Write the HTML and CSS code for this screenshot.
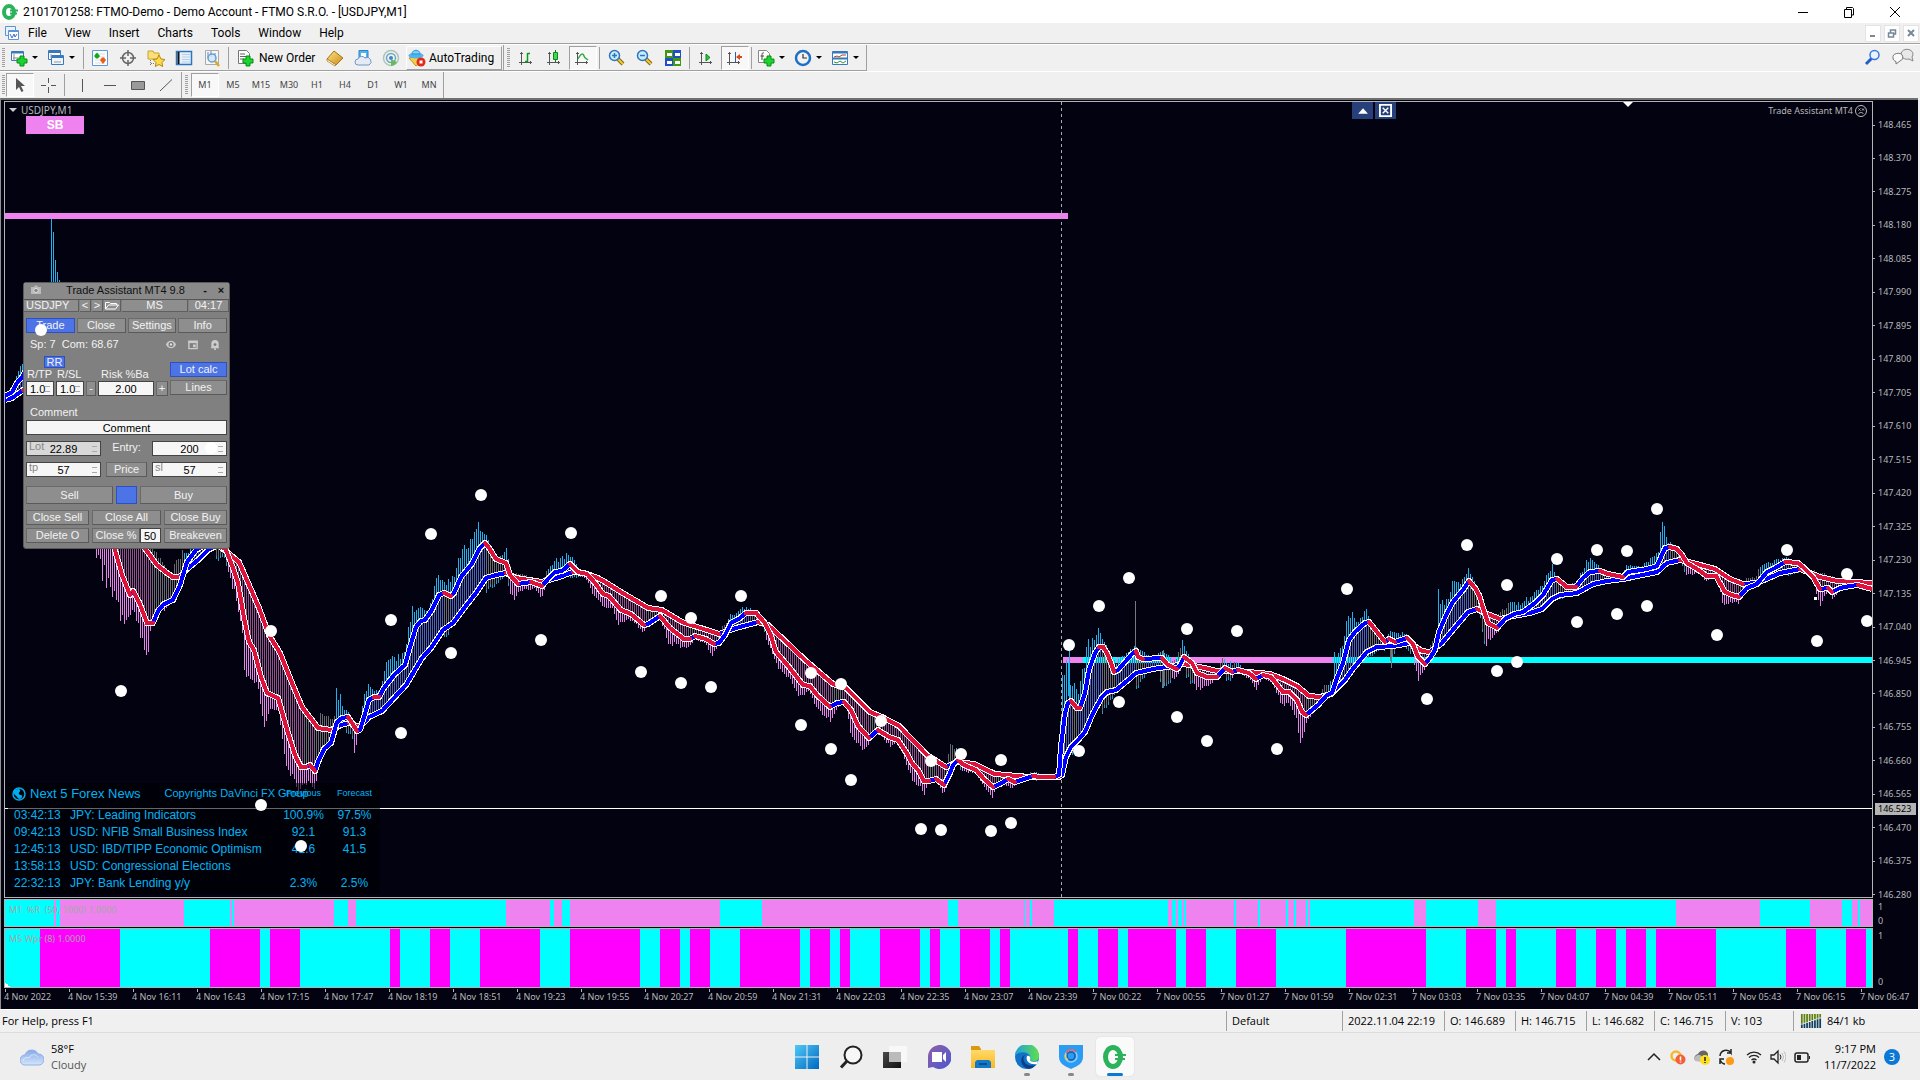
FILE: index.html
```html
<!DOCTYPE html>
<html lang="en">
<head>
<meta charset="utf-8">
<title>2101701258: FTMO-Demo - Demo Account - FTMO S.R.O. - [USDJPY,M1]</title>
<link rel="stylesheet" href="styles.css">
</head>
<body>
<svg class="defs" aria-hidden="true">
  <defs>
    <linearGradient id="gWin" x1="0" y1="0" x2="1" y2="1"><stop offset="0" stop-color="#4fc9f7"/><stop offset="1" stop-color="#0067c0"/></linearGradient>
    <linearGradient id="gDark" x1="0" y1="0" x2="1" y2="1"><stop offset="0" stop-color="#4a4a4a"/><stop offset="1" stop-color="#111"/></linearGradient>
    <linearGradient id="gChat" x1="0" y1="0" x2="1" y2="1"><stop offset="0" stop-color="#8f5fa8"/><stop offset="1" stop-color="#4a58d0"/></linearGradient>
    <linearGradient id="gFold" x1="0" y1="0" x2="0" y2="1"><stop offset="0" stop-color="#ffd96a"/><stop offset="1" stop-color="#f8b820"/></linearGradient>
    <linearGradient id="gEdge" x1="0" y1="0" x2="1" y2="0"><stop offset="0" stop-color="#1f9fe0"/><stop offset="1" stop-color="#5fe04a"/></linearGradient>
    <linearGradient id="gCloud" x1="0" y1="0" x2="0" y2="1"><stop offset="0" stop-color="#86a9e8"/><stop offset="1" stop-color="#d5e6fb"/></linearGradient>
    <linearGradient id="gGold" x1="0" y1="0" x2="1" y2="1"><stop offset="0" stop-color="#ffe58a"/><stop offset="1" stop-color="#c98a12"/></linearGradient>
    <g id="plus"><path d="M9 7h4v3h3v4h-3v3H9v-3H6v-4h3z" fill="#19d52e" stroke="#0b8a14"/></g>
    <g id="axes" fill="none" stroke="#555"><path d="M3.500 3v13M1 13.500h13M2 4.500h3M12.500 12v3"/></g>
    <g id="glass"><path d="M10 10l5 5" stroke="#8a6a10" stroke-width="4"/><path d="M10 10l5 5" stroke="#f0c840" stroke-width="2"/><circle cx="6.500" cy="6.500" r="5" fill="#c9ecfb" stroke="#2f74bd" stroke-width="1.500"/></g>
  </defs>
</svg>

<header class="titlebar">
  <svg class="logo" viewBox="0 0 16 16"><ellipse cx="7" cy="8" rx="5" ry="6" fill="#fff" stroke="#2bb35c" stroke-width="4"/><path d="M8 6.500h8M8 9.500h7" stroke="#2bb35c" stroke-width="2"/></svg>
  <h1>2101701258: FTMO-Demo - Demo Account - FTMO S.R.O. - [USDJPY,M1]</h1>
  <div class="wincontrols">
    <button aria-label="Minimize"><svg viewBox="0 0 12 12"><path d="M1 6.500h10" stroke="#000"/></svg></button>
    <button aria-label="Restore"><svg viewBox="0 0 12 12"><path d="M1.500 3.500h7v8h-7zM3.500 3V1.500h6l1 1V9H9" fill="none" stroke="#000"/></svg></button>
    <button aria-label="Close"><svg viewBox="0 0 12 12"><path d="M1 1l10 10M11 1L1 11" stroke="#000"/></svg></button>
  </div>
</header>

<nav class="menubar">
  <svg class="mdi" viewBox="0 0 16 16"><path d="M1.500 1.500h10v9h-10z" fill="#eaf3fc" stroke="#5d94d8"/><path d="M4.500 5.500h10v9h-10z" fill="#fff" stroke="#5d94d8"/><path d="M5 6.500h9" stroke="#5d94d8"/><path d="M6 9l2 4 2-4 1 3 2-3" fill="none" stroke="#3b6fd0"/></svg>
  <button>File</button><button>View</button><button>Insert</button><button>Charts</button><button>Tools</button><button>Window</button><button>Help</button>
  <div class="mdicontrols">
    <button aria-label="Minimize chart"><svg viewBox="0 0 10 10"><path d="M2 8h5" stroke="#778899" stroke-width="2"/></svg></button>
    <button aria-label="Restore chart"><svg viewBox="0 0 10 10"><path d="M1.500 5h5v4h-5zM3.500 5V2h5v4H7" fill="none" stroke="#778899" stroke-width="1.500"/></svg></button>
    <button aria-label="Close chart"><svg viewBox="0 0 10 10"><path d="M2 2l6 6M8 2L2 8" stroke="#778899" stroke-width="2"/></svg></button>
  </div>
</nav>

<div class="toolrow">
  <div class="toolbar main-tools">
    <span class="grip"></span>
    <button class="tool drop" aria-label="New chart"><svg viewBox="0 0 18 18"><path d="M1.500 2.500h12v9h-12z" fill="#fff" stroke="#3a78bd"/><path d="M2 3.500h11" stroke="#3a78bd" stroke-width="2"/><path d="M4 5v6M3 9h8" stroke="#888"/><use href="#plus" x="1"/></svg></button>
    <button class="tool drop" aria-label="Profiles"><svg viewBox="0 0 18 18"><path d="M1.500 1.500h12v9h-12z" fill="#fff" stroke="#3a78bd"/><path d="M1.500 3h12" stroke="#3a78bd" stroke-width="2"/><path d="M4.500 6.500h12v9h-12z" fill="#eef6fd" stroke="#3a78bd"/><path d="M5 8h11" stroke="#3a78bd" stroke-width="2"/><path d="M7 13h7M4 5v4" stroke="#999"/></svg></button>
    <span class="sep"></span>
    <button class="tool" aria-label="Market Watch"><svg viewBox="0 0 18 18"><path d="M1.500 1.500h15v15h-15z" fill="#fff" stroke="#5a9bdc"/><path d="M4 14h10M4 11h10M4 8h10M4 5h10" stroke="#ddd"/><path d="M3 7l3-3.500L9 7 7 9.500H5z" fill="#14a81c"/><path d="M9 11l2-2.500h2L15 11l-3 4z" fill="#f05a14"/></svg></button>
    <button class="tool" aria-label="Data Window"><svg viewBox="0 0 18 18"><circle cx="9" cy="9" r="5.500" fill="none" stroke="#666" stroke-width="1.500"/><path d="M9 1v6M9 11v6M1 9h6M11 9h6" stroke="#666" stroke-width="1.500"/></svg></button>
    <button class="tool" aria-label="Navigator"><svg viewBox="0 0 18 18"><path d="M1 2h5l1 2h5v6H1z" fill="#fbe07a" stroke="#c9a030"/><path d="M3.500 11v6M4 14.500h4" stroke="#777" stroke-dasharray="1 1"/><path d="M12 6l2 4 4 .5-3 3 .7 4-3.700-2-3.700 2 .7-4-3-3 4-.5z" fill="#ffd94a" stroke="#b58a10"/></svg></button>
    <button class="tool" aria-label="Terminal"><svg viewBox="0 0 18 18"><path d="M1.500 2.500h15v13h-15z" fill="#e5f1fc" stroke="#2f74bd" stroke-width="1.500"/><path d="M3.500 3v12" stroke="#111" stroke-width="2"/><path d="M7 5.500h8M7 8h8M7 10.500h8M7 13h8" stroke="#b8cfe6"/></svg></button>
    <button class="tool" aria-label="Strategy Tester"><svg viewBox="0 0 18 18"><path d="M2.500 1.500h13v14h-13z" fill="#f6f6f6" stroke="#aaa"/><path d="M5 3v6M8 2v6M12 4v6" stroke="#5a8ac0"/><path d="M12 12l4 5" stroke="#d9a92a" stroke-width="2.500"/><circle cx="9" cy="9" r="4" fill="#cfe6f8cc" stroke="#6a9ed0" stroke-width="1.500"/></svg></button>
    <span class="sep wide-sep"></span>
    <button class="tool text" id="new-order"><svg viewBox="0 0 18 18"><path d="M2.500 1.500h8l3 3v10h-11z" fill="#fff" stroke="#777"/><path d="M4 5h5M4 7.500h7M4 10h4" stroke="#666"/><use href="#plus" x="1"/></svg>New Order</button>
    <button class="tool" aria-label="MetaEditor"><svg viewBox="0 0 18 18"><path d="M1 10l7-8 9 7-7 7z" fill="url(#gGold)" stroke="#a8740c"/><path d="M1 10l9 6-1 1-8-5z" fill="#fff" stroke="#a8740c" stroke-width=".7"/></svg></button>
    <button class="tool" aria-label="Signals"><svg viewBox="0 0 18 18"><path d="M5 1.500h9v8H5z" fill="#4fb5ee" stroke="#2f80c8"/><path d="M7 4h5v4H7z" fill="#fff"/><path d="M4 16a3 3 0 0 1 0-6 4 4 0 0 1 7-1 4 4 0 0 1 4 7z" fill="#e4ebf4" stroke="#6f98c8"/></svg></button>
    <button class="tool" aria-label="VPS"><svg viewBox="0 0 18 18"><g fill="none"><circle cx="9" cy="9" r="7.500" stroke="#aac5b8" stroke-width="1.500"/><circle cx="9" cy="9" r="4.500" stroke="#6fa6c8" stroke-width="1.500"/></g><circle cx="9" cy="9" r="2" fill="#3f84c8"/><path d="M9 10v7a8 8 0 0 0 6-4" fill="#67bb5c"/></svg></button>
    <button class="tool text auto"><svg viewBox="0 0 18 18"><path d="M1 9l7 8 5-4-2-6z" fill="#f4cd4a" stroke="#c09520"/><ellipse cx="8" cy="6.500" rx="7.500" ry="3" fill="#4fb5ee"/><path d="M4 5c0-5 8-5 8 0z" fill="#7fd0f7" stroke="#2f90d0"/><circle cx="13" cy="13" r="4.500" fill="#e02a1a"/><path d="M11.500 11.500h3v3h-3z" fill="#fff"/></svg>AutoTrading</button>
  </div>
  <div class="toolbar chart-tools">
    <span class="grip"></span>
    <button class="tool" aria-label="Bar chart"><svg viewBox="0 0 18 18"><use href="#axes"/><path d="M9.500 4v9M9.500 4.500H12M7 12.500h2.500" stroke="#0a9a1a" stroke-width="1.500" fill="none"/></svg></button>
    <button class="tool" aria-label="Candlesticks"><svg viewBox="0 0 18 18"><use href="#axes"/><path d="M9.500 1v12" stroke="#0a7a1a"/><path d="M7.500 3.500h4v7h-4z" fill="#3fd94f" stroke="#0a8a1a"/></svg></button>
    <button class="tool pressed" aria-label="Line chart"><svg viewBox="0 0 18 18"><use href="#axes"/><path d="M4 10c3-6 5-6 6-3s2 2 4 4" stroke="#3aa84a" stroke-width="1.500" fill="none"/></svg></button>
    <span class="sep wide-sep"></span>
    <button class="tool" aria-label="Zoom in"><svg viewBox="0 0 18 18"><use href="#glass"/><path d="M4 6.500h5M6.500 4v5" stroke="#2f74bd" stroke-width="1.500"/></svg></button>
    <button class="tool" aria-label="Zoom out"><svg viewBox="0 0 18 18"><use href="#glass"/><path d="M4 6.500h5" stroke="#2f74bd" stroke-width="1.500"/></svg></button>
    <button class="tool" aria-label="Tile windows"><svg viewBox="0 0 18 18"><path d="M1 1h8v8H1zM9 9h8v8H9z" fill="#3f9a10"/><path d="M9 1h8v8H9zM1 9h8v8H1z" fill="#1f4fc8"/><path d="M3 4h5v3H3zM11 4h5v3h-5zM3 12h5v3H3zM11 12h5v3h-5z" fill="#fff"/></svg></button>
    <span class="sep wide-sep"></span>
    <button class="tool" aria-label="Auto scroll"><svg viewBox="0 0 18 18"><use href="#axes"/><path d="M8 5l4 3.500L8 12z" fill="#2fc23f" stroke="#0a8a1a"/></svg></button>
    <button class="tool pressed" aria-label="Chart shift"><svg viewBox="0 0 18 18"><use href="#axes"/><path d="M9.500 3v10" stroke="#2860b0"/><path d="M10 8l4-3v2h2v2h-2v2z" fill="#d8481a"/></svg></button>
    <span class="sep wide-sep"></span>
    <button class="tool drop" aria-label="Indicators"><svg viewBox="0 0 18 18"><path d="M1.500 1.500h8l3 3v9h-11z" fill="#fff" stroke="#888"/><path d="M7 4c-2-1-2 1-2 3v4M3.500 7H7" fill="none" stroke="#444"/><use href="#plus" x="1"/></svg></button>
    <button class="tool drop" aria-label="Periods"><svg viewBox="0 0 18 18"><circle cx="9" cy="9" r="7" fill="#f2f2f2" stroke="#1f6fc8" stroke-width="2.500"/><path d="M9 5v4h4" fill="none" stroke="#333" stroke-width="1.200"/></svg></button>
    <button class="tool drop" aria-label="Templates"><svg viewBox="0 0 18 18"><path d="M1.500 2.500h15v13h-15z" fill="#fff" stroke="#3a78bd"/><path d="M2 3.500h14M2 9.500h14" stroke="#3a78bd" stroke-width="2"/><path d="M3 8l3-1 2 1 3-2 4 0" fill="none" stroke="#a8441a"/><path d="M3 13l3 1 3-2 3 2 3-2" fill="none" stroke="#2a9a3a"/></svg></button>
  </div>
  <div class="toolbar-end">
    <button aria-label="Search"><svg viewBox="0 0 18 18"><path d="M2 16l6-6" stroke="#1f5fc8" stroke-width="3"/><circle cx="10.500" cy="7" r="4.500" fill="#e9f2ff" stroke="#3a78dd" stroke-width="1.500"/></svg></button>
    <button aria-label="Messages"><svg class="wide" viewBox="0 0 22 18"><path d="M9 6a6 5 0 1 1 11 3l1 4-4-2c-5 1-8-2-8-5z" fill="#e8e8e8" stroke="#888"/><path d="M1 10a5 4 0 1 1 7 3l-4 3v-2.500c-2-.5-3-2-3-3.500z" fill="#fafafa" stroke="#777"/></svg></button>
  </div>
</div>

<div class="toolrow second">
  <div class="toolbar line-tools">
    <span class="grip"></span>
    <button class="tool pressed" aria-label="Cursor"><svg viewBox="0 0 18 18"><path d="M5 2v12l3-3 2.500 5 2-1-2.500-5h4z" fill="#555"/></svg></button>
    <button class="tool" aria-label="Crosshair"><svg viewBox="0 0 18 18"><path d="M9.500 2v5M9.500 11v6M2 9.500h5M12 9.500h5" stroke="#555"/></svg></button>
    <span class="sep wide-sep"></span>
    <button class="tool" aria-label="Vertical line"><svg viewBox="0 0 18 18"><path d="M9.500 3v13" stroke="#555"/></svg></button>
    <button class="tool" aria-label="Horizontal line"><svg viewBox="0 0 18 18"><path d="M3 9.500h12" stroke="#555"/></svg></button>
    <button class="tool" aria-label="Rectangle"><svg viewBox="0 0 18 18"><path d="M2.500 5.500h13v8h-13z" fill="#999" stroke="#555"/></svg></button>
    <button class="tool" aria-label="Trendline"><svg viewBox="0 0 18 18"><path d="M3 15L15 3.500" stroke="#555"/></svg></button>
  </div>
  <div class="toolbar periods">
    <span class="grip"></span>
    <button class="tool pressed">M1</button><button class="tool">M5</button><button class="tool">M15</button><button class="tool">M30</button><button class="tool">H1</button><button class="tool">H4</button><button class="tool">D1</button><button class="tool">W1</button><button class="tool">MN</button>
  </div>
</div>

<main class="chart">
  <section class="plot" aria-label="USDJPY chart">
    <svg class="canvas" id="series" viewBox="5 102 1867 795" preserveAspectRatio="none"></svg>
    <div class="symbol"><svg viewBox="0 0 8 5"><path d="M0 0h8L4 4z" fill="#ccc"/></svg>USDJPY,M1</div>
    <button class="sb">SB</button>
    <div class="chartbtns">
      <button aria-label="Collapse"><svg viewBox="0 0 12 12"><path d="M2 9h9L6.500 4z" fill="#fff"/></svg></button>
      <button aria-label="Hide"><svg viewBox="0 0 14 14"><path d="M1 1h12v12H1z" fill="#274079" stroke="#fff" stroke-width="2"/><path d="M4 4l6 6M10 4l-6 6" stroke="#fff" stroke-width="1.500"/></svg></button>
    </div>
    <div class="expert">Trade Assistant MT4<svg viewBox="0 0 12 12"><g fill="none" stroke="#bbb"><circle cx="6" cy="6" r="5.500"/><path d="M3.500 3.500l2 2M5.500 3.500l-2 2M7 3.500l2 2M9 3.500l-2 2M3.500 9c1-2 4-2 5 0"/></g></svg></div>

    <div class="news">
      <table>
        <colgroup><col class="c-time"><col class="c-event"><col class="c-num"><col class="c-num"></colgroup>
        <thead><tr>
          <th class="head" colspan="2"><svg viewBox="0 0 14 14"><circle cx="7" cy="7" r="6" fill="none" stroke="#00aeef" stroke-width="1.500"/><path d="M2 4c2-2 5-3 6-1s-2 2-1 4 4 0 3 3-4 2-5 0-4-2-3-6z" fill="#00aeef"/></svg><span class="name">Next 5 Forex News</span><span class="copy">Copyrights DaVinci FX Group</span></th>
          <th>Previous</th><th>Forecast</th></tr></thead>
        <tbody>
          <tr><td>03:42:13</td><td>JPY: Leading Indicators</td><td>100.9%</td><td>97.5%</td></tr>
          <tr><td>09:42:13</td><td>USD: NFIB Small Business Index</td><td>92.1</td><td>91.3</td></tr>
          <tr><td>12:45:13</td><td>USD: IBD/TIPP Economic Optimism</td><td>41.6</td><td>41.5</td></tr>
          <tr><td>13:58:13</td><td>USD: Congressional Elections</td><td></td><td></td></tr>
          <tr><td>22:32:13</td><td>JPY: Bank Lending y/y</td><td>2.3%</td><td>2.5%</td></tr>
        </tbody>
      </table>
    </div>

    <form class="assistant">
      <div class="a-title"><svg viewBox="0 0 12 10"><path d="M1 2h3l1-1.500h2L8 2h3v7H1z" fill="#bbb"/><circle cx="6" cy="5.500" r="2.200" fill="#888" stroke="#ddd"/></svg><span>Trade Assistant MT4 9.8</span><button type="button" aria-label="Minimize panel">-</button><button type="button" aria-label="Close panel">×</button></div>
      <div class="a-info"><span class="cell sym">USDJPY</span><button type="button" class="cell">&lt;</button><button type="button" class="cell">&gt;</button><button type="button" class="cell" aria-label="Open"><svg viewBox="0 0 14 9"><path d="M.5 8V1.500h4l1 1h6V4M.5 8l3-4h10l-3 4z" fill="none" stroke="#fff"/></svg></button><span class="cell">MS</span><span class="cell">04:17</span></div>
      <div class="a-body">
        <div class="row tabs"><button type="button" class="on">Trade</button><button type="button">Close</button><button type="button">Settings</button><button type="button">Info</button></div>
        <div class="row spread"><span>Sp: 7&nbsp; Com: 68.67</span>
          <svg viewBox="0 0 12 10"><path d="M1 5c2-5 8-5 10 0-2 5-8 5-10 0z" fill="#ccc"/><circle cx="6" cy="5" r="2.500" fill="#777"/><circle cx="6" cy="5" r="1.200" fill="#ddd"/></svg>
          <svg viewBox="0 0 12 12"><path d="M1.500 2.500h9v8h-9z" fill="none" stroke="#ccc" stroke-width="1.500"/><path d="M1 3.500h10" stroke="#ccc" stroke-width="2"/><path d="M6 6h3v3H6z" fill="#ccc"/></svg>
          <svg viewBox="0 0 12 12"><path d="M2 9V5a4 4 0 0 1 8 0v4l1 1H1z" fill="#ccc"/><path d="M5 11h2" stroke="#ccc" stroke-width="2"/><circle cx="6" cy="6" r="1.500" fill="#777"/></svg></div>
        <div class="risk">
          <div class="rr"><button type="button" class="on">RR</button></div>
          <label for="rtp">R/TP</label><label for="rsl">R/SL</label><label for="risk" class="wide-label">Risk %Ba</label>
          <span class="field small"><input id="rtp" value="1.0"><i></i></span><span class="field small"><input id="rsl" value="1.0"><i></i></span><button type="button">-</button><input id="risk" class="mid" value="2.00"><button type="button">+</button>
        </div>
        <div class="side"><button type="button" class="on">Lot calc</button><button type="button">Lines</button></div>
        <label class="full clabel" for="comment">Comment</label>
        <input id="comment" class="full mid" value="Comment">
        <div class="row trio"><span class="field grey"><label for="lot">Lot</label><input id="lot" value="22.89"><i></i></span><label for="entry" class="center">Entry:</label><span class="field"><input id="entry" value="200"><i></i></span></div>
        <div class="row trio"><span class="field"><label for="tp">tp</label><input id="tp" value="57"><i></i></span><button type="button">Price</button><span class="field"><label for="sl">sl</label><input id="sl" value="57"><i></i></span></div>
        <div class="row deal"><button type="button">Sell</button><button type="button" class="on" aria-label="Toggle"></button><button type="button">Buy</button></div>
        <div class="row closes"><button type="button">Close Sell</button><button type="button">Close All</button><button type="button">Close Buy</button></div>
        <div class="row closes"><button type="button">Delete O</button><span class="pct"><button type="button">Close %</button><input aria-label="Close percent" value="50"></span><button type="button">Breakeven</button></div>
      </div>
    </form>
    <svg class="canvas over" id="dots" viewBox="5 102 1867 795" preserveAspectRatio="none"></svg>
  </section>
  <div class="prices">
    <span>148.465</span><span>148.370</span><span>148.275</span><span>148.180</span><span>148.085</span><span>147.990</span><span>147.895</span><span>147.800</span><span>147.705</span><span>147.610</span><span>147.515</span><span>147.420</span><span>147.325</span><span>147.230</span><span>147.135</span><span>147.040</span><span>146.945</span><span>146.850</span><span>146.755</span><span>146.660</span><span>146.565</span><span>146.470</span><span>146.375</span><span>146.280</span>
    <b class="last">146.523</b>
  </div>
  <section class="strip s1"><svg class="canvas" id="strip1" viewBox="5 0 1867 10" preserveAspectRatio="none"></svg><span>M1&nbsp; %R&nbsp; (50, 1000) 1.0000</span></section>
  <div class="scale"><span>1</span><span>0</span></div>
  <section class="strip s2"><svg class="canvas" id="strip2" viewBox="5 0 1867 10" preserveAspectRatio="none"></svg><span>M5 Wpr (8) 1.0000</span></section>
  <div class="scale"><span>1</span><span>0</span></div>
  <div class="times">
    <span>4 Nov 2022</span><span>4 Nov 15:39</span><span>4 Nov 16:11</span><span>4 Nov 16:43</span><span>4 Nov 17:15</span><span>4 Nov 17:47</span><span>4 Nov 18:19</span><span>4 Nov 18:51</span><span>4 Nov 19:23</span><span>4 Nov 19:55</span><span>4 Nov 20:27</span><span>4 Nov 20:59</span><span>4 Nov 21:31</span><span>4 Nov 22:03</span><span>4 Nov 22:35</span><span>4 Nov 23:07</span><span>4 Nov 23:39</span><span>7 Nov 00:22</span><span>7 Nov 00:55</span><span>7 Nov 01:27</span><span>7 Nov 01:59</span><span>7 Nov 02:31</span><span>7 Nov 03:03</span><span>7 Nov 03:35</span><span>7 Nov 04:07</span><span>7 Nov 04:39</span><span>7 Nov 05:11</span><span>7 Nov 05:43</span><span>7 Nov 06:15</span><span>7 Nov 06:47</span>
  </div>
</main>

<footer class="status">
  <span class="help">For Help, press F1</span><span class="profile">Default</span><span class="date">2022.11.04 22:19</span><span class="v">O: 146.689</span><span class="v">H: 146.715</span><span class="v low">L: 146.682</span><span class="v">C: 146.715</span><span class="v low">V: 103</span>
  <span class="net"><svg viewBox="0 0 24 16"><path d="M1.500 0v11M4.500 0v10M7.500 0v9M10.500 0v8M13.500 0v7M16.500 0v6M19.500 0v5M22.500 0v4" stroke="#5f7f10" stroke-width="2"/><path d="M1.500 16v-4M4.500 16v-5M7.500 16v-6M10.500 16v-7M13.500 16v-8M16.500 16v-9M19.500 16V6M22.500 16V5" stroke="#0f3f60" stroke-width="2"/></svg>84/1 kb</span>
</footer>

<div class="taskbar">
  <button class="weather"><svg viewBox="0 0 24 18"><path d="M5 17a5 5 0 0 1 0-10 7 7 0 0 1 13-1 5.500 5.500 0 0 1 1 11z" fill="url(#gCloud)" stroke="#8fb0ea"/><path d="M3 13a4 4 0 0 1 6-3 5 5 0 0 1 9-1" fill="none" stroke="#fff" opacity=".5"/></svg><span>58°F<small>Cloudy</small></span></button>
  <div class="apps">
    <button aria-label="Start"><svg viewBox="0 0 24 24"><path d="M0 0h11.500v11.500H0zM12.500 0H24v11.500H12.500zM0 12.500h11.500V24H0zM12.500 12.500H24V24H12.500z" fill="url(#gWin)"/></svg></button>
    <button aria-label="Search"><svg viewBox="0 0 24 24"><circle cx="14" cy="10" r="8.500" fill="#f7f7f7" stroke="#222" stroke-width="2"/><path d="M8 16l-6 6.500" stroke="#222" stroke-width="3"/></svg></button>
    <button aria-label="Task view"><svg viewBox="0 0 24 24"><path d="M0 7h18v16H0z" fill="url(#gDark)"/><path d="M6 1h18v16H6z" fill="#f8f8f8"/><path d="M6 7h12v10H6z" fill="#bbb"/></svg></button>
    <button aria-label="Chat"><svg viewBox="0 0 24 24"><path d="M12 0a12 12 0 1 1-6 22l-5 1 0-11A12 12 0 0 1 12 0z" fill="url(#gChat)"/><path d="M5 7h10v10H5zM16 10l3-3v10l-3-3z" fill="#fff"/></svg></button>
    <button aria-label="File Explorer"><svg viewBox="0 0 24 24"><path d="M0 1h8l2 3v4H0z" fill="#d99a10"/><path d="M0 5h24v18H0z" fill="url(#gFold)"/><path d="M4 23v-6l2-2h12l2 2v6z" fill="#1478c8"/><path d="M8 19h8" stroke="#0a4f90" stroke-width="2"/></svg></button>
    <button class="run" aria-label="Edge"><svg viewBox="0 0 24 24"><circle cx="12" cy="12" r="12" fill="#1272c8"/><path d="M0 11A12 12 0 0 1 24 11c0 5-4 6-8 5-3-1 0-2-1-5C13 6 3 6 0 11z" fill="url(#gEdge)"/><path d="M10 10c-4 4 0 13 11 10a12 12 0 0 1-7 4C5 22 4 12 10 10z" fill="#0c3f88"/><path d="M12 11c2-1 4 1 3 3s2 4 8 2l-1 3c-6 1-12-2-10-8z" fill="#fff"/></svg></button>
    <button class="run" aria-label="VPN"><svg viewBox="0 0 24 24"><path d="M0 0h24v12c0 6-5 9-12 12C5 21 0 18 0 12z" fill="#2a9cf4"/><g fill="none" stroke-width="1.500"><circle cx="12" cy="11" r="6" stroke="#8fd0f7"/><path d="M7 8a6 6 0 0 1 10-1" stroke="#f05a5a"/><circle cx="12" cy="11" r="4" stroke="#1560b0"/><path d="M9 15a5 5 0 0 1-2-6" stroke="#e8d05a"/></g></svg></button>
    <button class="active" aria-label="FTMO"><svg viewBox="0 0 24 24"><ellipse cx="10" cy="12" rx="7.500" ry="9.500" fill="none" stroke="#2bb35c" stroke-width="5"/><path d="M12 10h11M12 14h10M17 6v12" stroke="#2bb35c" stroke-width="2"/></svg></button>
  </div>
  <div class="tray">
    <button aria-label="Show hidden icons"><svg viewBox="0 0 16 16"><path d="M2 11l6-6 6 6" fill="none" stroke="#222" stroke-width="1.500"/></svg></button>
    <button aria-label="Sync alert"><svg viewBox="0 0 16 16"><circle cx="6" cy="7" r="4.500" fill="none" stroke="#f5b82a" stroke-width="2.500"/><circle cx="10.500" cy="10.500" r="5" fill="#f2603a"/><path d="M10.500 7.500v4M10.500 12.500v1" stroke="#fff" stroke-width="1.500"/></svg></button>
    <button aria-label="Cloud warning"><svg viewBox="0 0 16 16"><path d="M1 11a4 4 0 0 1 3-6c3-5 9-4 10 0v6z" fill="#666"/><path d="M1 12a4 4 0 0 1 7-4v5z" fill="#bbb"/><circle cx="11" cy="11" r="5" fill="#ffdf1a"/><path d="M11 8v4M11 13v1" stroke="#222" stroke-width="1.500"/></svg></button>
    <button aria-label="Update"><svg viewBox="0 0 16 16"><path d="M2 7a6 6 0 0 1 11-3V0M13 4H9M2 15v-5h4M2 11c1 2 3 4 5 4" fill="none" stroke="#222" stroke-width="1.500"/><circle cx="12" cy="12" r="4" fill="#ff9a14"/></svg></button>
    <button class="first" aria-label="Wi-Fi"><svg viewBox="0 0 16 16"><g fill="none" stroke="#222" stroke-width="1.300"><path d="M1 6a10 10 0 0 1 14 0M3 8.500a7 7 0 0 1 10 0M5.500 11a4 4 0 0 1 5 0"/></g><circle cx="8" cy="13" r="1.500" fill="#222"/></svg></button>
    <button aria-label="Volume"><svg viewBox="0 0 16 16"><path d="M1 6h3l4-4v12l-4-4H1z" fill="none" stroke="#222" stroke-width="1.300"/><path d="M10 5.500q2 2.500 0 5" fill="none" stroke="#222"/><path d="M12 4q3 4 0 8M14 2.500q4 5.500 0 11" fill="none" stroke="#bbb"/></svg></button>
    <button aria-label="Battery"><svg viewBox="0 0 16 16"><rect x="1" y="4" width="13" height="9" rx="2" fill="none" stroke="#222" stroke-width="1.500"/><path d="M3 6h4v5H3zM15 7h1v3h-1z" fill="#222"/></svg></button>
    <button class="clock">9:17 PM<br>11/7/2022</button>
    <button class="badge">3</button>
  </div>
</div>
<script src="chart.js"></script>
</body>
</html>
```
FILE: styles.css
```css
* { box-sizing: border-box; }
body {
  margin: 0;
  min-height: 100vh;
  display: flex;
  flex-direction: column;
  background: #f0f0f0;
  font: 12px/16px Roboto, "Open Sans", sans-serif;
  color: #000;
  overflow: hidden;
}
button, input { font: inherit; color: inherit; margin: 0; padding: 0; border: 0; background: none; border-radius: 0; }
button { white-space: nowrap; }
svg { display: block; flex: none; }
.defs { position: absolute; width: 0; height: 0; }

/* window frame */
.titlebar { display: flex; align-items: center; height: 23px; background: #fff; padding-left: 2px; }
.titlebar h1 { font-size: 12px; font-weight: 400; margin: 0 auto 0 5px; }
.logo { width: 16px; height: 16px; }
.wincontrols { display: flex; padding-right: 2px; }
.wincontrols button { width: 46px; height: 22px; display: grid; place-items: center; }
.wincontrols svg { width: 12px; height: 12px; }
.menubar { display: flex; align-items: center; height: 21px; padding: 0 1px 0 4px; border-bottom: 1px solid #a0a0a0; }
.menubar > button { padding: 0 9px; }
.mdi { width: 16px; height: 16px; margin-right: -1px; }
.mdicontrols { display: flex; gap: 3px; margin-left: auto; }
.mdicontrols button { width: 16px; height: 17px; background: #fff; display: grid; place-items: center; border: 1px solid #e4e4e4; }
.mdicontrols svg { width: 10px; height: 10px; }

/* toolbars */
.toolrow { display: flex; height: 27px; border-top: 1px solid #fff; }
.toolbar { display: flex; align-items: center; height: 26px; padding-left: 2px; border-bottom: 1px solid #a0a0a0; border-right: 1px solid #a0a0a0; }
.second .toolbar { border-bottom: 0; }
.grip { width: 3px; height: 20px; margin-right: 3px; background: repeating-linear-gradient(#a0a0a0 0 1px, transparent 1px 2px); }
.sep { width: 1px; height: 22px; margin: 0 2px 0 1px; background: #a0a0a0; }
.wide-sep { margin: 0 3px 0 2px; }
.tool { width: 28px; height: 24px; display: flex; align-items: center; justify-content: center; }
.tool svg, .toolbar-end svg { width: 18px; height: 18px; }
.tool.drop { width: 37px; justify-content: flex-start; padding-left: 2px; }
.tool.drop::after { content: ""; border: 3px solid transparent; border-top-color: #000; border-bottom: 0; margin-left: 4px; }
.tool.text { width: 89px; justify-content: flex-start; padding-left: 4px; gap: 5px; }
.tool.auto { width: 96px; gap: 3px; padding-left: 1px; border: 1px solid #fff; border-right-color: #a0a0a0; border-bottom-color: #a0a0a0; margin: 0 1px 0 1px; }
.tool.pressed { background: #f8f8f8; border: 1px solid #fff; border-top-color: #a0a0a0; border-left-color: #a0a0a0; }
.chart-tools { padding-left: 3px; }
.line-tools .grip { margin-right: 1px; }
.line-tools { padding-right: 1px; }
.toolbar-end { display: flex; gap: 10px; margin-left: auto; padding: 0 6px 2px 0; align-items: center; }
.toolbar-end .wide { width: 22px; }
.periods { font: 9px/12px "Noto Sans", sans-serif; color: #444; padding-left: 3px; }

/* chart window */
.chart {
  flex: 1;
  min-height: 600px;
  display: grid;
  grid-template-columns: minmax(0, 1fr) 45px;
  grid-template-rows: minmax(0, 1fr) 28px 60px 20px;
  row-gap: 1px;
  padding: 1px 0 0 3px;
  margin-right: 2px;
  background: #020210;
  border-top: 2px solid #707070;
  border-left: 1px solid #909090;
  font: 9px/12px "Noto Sans", sans-serif;
  color: #b8b8b8;
}
.plot, .strip { position: relative; border: 1px solid #b4b4b4; min-width: 0; }
.canvas { position: absolute; inset: 0; width: 100%; height: 100%; }
.over { pointer-events: none; }
.symbol { position: absolute; left: 4px; top: 2px; display: flex; align-items: center; gap: 4px; font-size: 10px; }
.symbol svg { width: 8px; height: 5px; }
.sb { position: absolute; left: 21px; top: 14px; width: 58px; height: 18px; background: #ee82ee; color: #fff; font: 700 12px/18px "Liberation Sans", sans-serif; }
.chartbtns { position: absolute; right: 476px; top: 0; display: flex; gap: 2px; }
.chartbtns button { width: 21px; height: 17px; background: #274079; display: grid; place-items: center; }
.chartbtns svg { width: 13px; height: 13px; }
.expert { position: absolute; right: 5px; top: 3px; display: flex; gap: 2px; }
.expert svg { width: 12px; height: 12px; }
.prices { position: relative; display: flex; flex-direction: column; justify-content: space-between; padding: 18px 0 0; margin-bottom: -3px; }
.prices span { display: flex; align-items: center; }
.prices span::before { content: ""; width: 2px; height: 1px; background: #b4b4b4; margin-right: 3px; }
.last { position: absolute; left: 2px; bottom: 86px; width: 41px; padding-left: 3px; background: #b4b4b4; color: #000; font-weight: 400; }
.strip > span { position: absolute; left: 4px; top: 4px; color: #a8a8a8; }
.s2::after { content: ""; position: absolute; left: 0; bottom: 0; width: 5px; height: 5px; background: linear-gradient(45deg, #fff 50%, transparent 50%); }
.scale { display: flex; flex-direction: column; justify-content: space-between; padding: 2px 0 0 5px; }
.times { grid-column: 1 / -1; display: grid; grid-template-columns: repeat(30, minmax(0, 1fr)); margin-right: -6px; overflow: hidden; }
.times span { white-space: nowrap; padding-top: 2px; position: relative; }
.times span::before { content: ""; position: absolute; left: 1px; top: 0; width: 1px; height: 3px; background: #b4b4b4; }

/* news table */
.news { position: absolute; left: 3px; bottom: 3px; width: 372px; background: rgba(0, 2, 4, .6); color: #00b4f4; font: 12px/17px "Liberation Sans", sans-serif; padding-bottom: 2px; }
.news table { border-collapse: collapse; table-layout: fixed; width: 100%; }
.news th, .news td { padding: 0; font-weight: 400; white-space: nowrap; text-align: center; }
.news thead th { font-size: 9px; height: 24px; padding-bottom: 3px; vertical-align: middle; }
.c-time { width: 62px; }
.c-num { width: 51px; }
.news td:first-child { text-align: left; padding-left: 6px; }
.news td:nth-child(2) { text-align: left; }
.news thead .head { text-align: left; padding-left: 4px; }
.head svg { width: 14px; height: 14px; display: inline-block; vertical-align: middle; margin-right: 4px; }
.head .name { font-size: 13px; vertical-align: middle; }
.head .copy { font-size: 11px; vertical-align: middle; margin-left: 24px; }

/* trade assistant panel */
.assistant { position: absolute; left: 18px; top: 180px; width: 207px; height: 267px; background: #808080; border: 1px solid #5a5a5a; border-radius: 3px; color: #f2f2f2; font: 11px/13px "Liberation Sans", sans-serif; }
.a-title { display: flex; height: 17px; align-items: center; padding: 0 2px 2px 6px; color: #111; background: #8a8a8a; border-bottom: 1px solid #555; }
.a-title svg { width: 12px; height: 10px; }
.a-title span { flex: 1; text-align: center; padding-left: 14px; }
.a-title button { width: 12px; font-weight: 700; margin-left: 4px; }
.a-info { display: grid; grid-template-columns: 55px 11px 11px 17px 1fr 40px; gap: 1px; height: 12px; }
.cell { background: #8e8e8e; border-right: 1px solid #5f5f5f; border-bottom: 1px solid #5f5f5f; line-height: 11px; text-align: center; display: grid; place-items: center; overflow: hidden; }
.cell svg { width: 14px; height: 9px; }
.sym { justify-content: start; padding-left: 2px; }
.a-body { padding: 6px 2px 0; display: grid; grid-template-columns: 142px 57px; column-gap: 2px; }
.a-body button { height: 15px; line-height: 13px; background: #8e8e8e; border: 1px solid #6a6a6a; border-right-color: #5a5a5a; border-bottom-color: #5a5a5a; color: #f2f2f2; overflow: hidden; }
.a-body button.on { background: #4d74e6; border-color: #2f50c0; }
.a-body input { height: 15px; background: #f6f6f6; color: #000; border: 1px solid #444; min-width: 0; width: 100%; padding: 0 3px; }
.a-body .mid, .field input { text-align: center; }
.row, .full { grid-column: 1 / -1; }
.row { display: grid; column-gap: 2px; }
.tabs { grid-template-columns: repeat(4, 1fr); }
.spread { grid-template-columns: 1fr 12px 12px 12px; column-gap: 10px; padding: 0 6px 0 4px; height: 23px; align-items: center; }
.spread svg { width: 12px; height: 11px; }
.risk { display: grid; grid-template-columns: 28px 28px 10px 56px 12px; column-gap: 2px; }
.risk .rr { grid-column: 1 / -1; height: 12px; padding-left: 18px; }
.risk .rr button { height: 12px; line-height: 10px; width: 21px; display: block; }
.risk > label { height: 13px; padding-left: 1px; }
.risk .wide-label { grid-column: 3 / -1; padding-left: 15px; }
.side { display: grid; row-gap: 3px; padding-top: 6px; align-content: start; }
.clabel { height: 14px; margin-top: 10px; padding-left: 4px; }
.trio { grid-template-columns: 75px 1fr 75px; column-gap: 5px; margin-top: 6px; }
.center { text-align: center; }
.field { position: relative; }
.field label { position: absolute; left: 3px; top: -1px; color: #888; }
.field i { position: absolute; right: 4px; top: 5px; width: 5px; height: 6px; border-top: 1px solid #aaa; border-bottom: 1px solid #aaa; }
.field input { display: block; }
.a-body .small input { text-align: left; }
.grey input { background: #d8d8d8; }
.deal { grid-template-columns: 1fr 21px 1fr; column-gap: 3px; margin: 9px 0 3px; }
.deal button { height: 18px; }
.closes { grid-template-columns: 63px 1fr 63px; column-gap: 3px; margin-top: 3px; }
.pct { display: grid; grid-template-columns: 48px 1fr; }

/* status bar */
.status { display: flex; height: 24px; align-items: center; padding-left: 2px; border-top: 1px solid #fff; border-bottom: 1px solid #dcdcdc; font: 11px/18px "Open Sans", sans-serif; }
.help { flex: 1; }
.status span + span { height: 20px; line-height: 20px; border-left: 1px solid #a0a0a0; padding-left: 5px; }
.profile { width: 116px; }
.date { width: 102px; }
.v { width: 71px; }
.v.low { width: 68px; }
.status .net { display: flex; align-items: center; gap: 4px; width: 127px; }
.net svg { width: 24px; height: 14px; }

/* taskbar */
.taskbar { display: grid; grid-template-columns: 1fr auto 1fr; align-items: center; height: 47px; background: #eee; font: 11px/16px "Open Sans", sans-serif; }
.weather { display: flex; justify-self: start; align-items: center; gap: 7px; padding-left: 20px; text-align: left; }
.weather svg { width: 24px; height: 18px; }
.weather small { display: block; font-size: 11px; color: #555; }
.apps { display: flex; gap: 6px; padding-left: 2px; }
.apps button { width: 38px; height: 39px; display: grid; place-items: center; position: relative; border-radius: 4px; }
.apps svg { width: 24px; height: 24px; }
.apps .active { background: #fafafa; box-shadow: 0 0 1px #bbb; }
.run::after, .active::after { content: ""; position: absolute; bottom: 0; left: 16px; width: 6px; height: 3px; border-radius: 2px; background: #888; }
.active::after { left: 11px; width: 16px; background: #0a78d4; }
.tray { display: flex; justify-self: end; align-items: center; gap: 8px; padding-right: 20px; }
.tray svg { width: 16px; height: 16px; }
.tray .first { margin-left: 4px; }
.clock { text-align: right; margin-left: 6px; }
.badge { width: 16px; height: 16px; border-radius: 50%; background: #0a78d4; color: #fff; line-height: 16px; text-align: center; }
```
FILE: chart.js
```js
// Draws the price plot and the two indicator strips.
const NS = 'http://www.w3.org/2000/svg';
const el = (parent, tag, attrs) => {
  const n = document.createElementNS(NS, tag);
  for (const k in attrs) n.setAttribute(k, attrs[k]);
  parent.appendChild(n);
  return n;
};
const pts = s => s.trim().split(/\s+/).map(p => p.split(',').map(Number));

const fast = pts(`5,396 12,392 17,383 23,376 40,340 60,400 90,470 115,550 122,575 130,595 133,591 139,602 147,623 153,623 158,611 164,604 173,600 180,585 187,562 196,550 215,540 226,550 233,568 238,583 244,618 249,642 254,650 261,677 267,693 278,698 282,712 288,733 295,755 301,767 306,767 310,765 315,771 318,762 324,749 331,743 337,722 342,718 348,717 352,723 357,731 360,730 364,717 369,700 374,697 379,697 384,688 394,675 405,665 410,647 416,627 421,621 425,620 432,610 439,595 444,593 451,596 454,593 461,577 471,565 480,548 485,543 489,548 496,559 506,563 510,575 518,584 531,582 542,586 549,578 555,572 562,571 570,564 578,572 587,574 595,583 603,594 609,596 621,610 631,614 644,625 648,624 660,616 670,628 684,639 690,639 695,636 706,639 714,644 719,643 725,635 731,623 740,618 746,613 756,613 764,622 770,633 776,652 789,667 803,685 810,686 817,695 830,707 837,703 844,702 851,710 858,726 869,738 878,730 889,737 898,740 906,752 912,763 918,770 924,781 929,781 936,779 944,785 950,773 953,765 958,760 964,765 976,770 984,779 993,787 1000,784 1008,779 1015,782 1033,776 1040,777 1054,777 1059,775 1061,747 1065,713 1068,703 1071,701 1077,708 1080,708 1085,693 1089,670 1095,653 1099,647 1103,647 1107,653 1111,663 1114,672 1118,670 1125,662 1132,654 1136,651 1138,657 1143,659 1162,658 1168,665 1177,669 1180,665 1184,657 1192,663 1197,673 1207,677 1217,677 1225,668 1232,672 1238,670 1249,673 1256,679 1263,675 1271,677 1283,692 1289,692 1297,700 1302,712 1306,715 1318,705 1327,695 1332,693 1337,678 1343,663 1349,640 1355,632 1365,623 1369,622 1377,632 1385,642 1389,639 1395,642 1407,638 1413,644 1418,657 1425,664 1430,658 1435,650 1439,632 1447,613 1453,602 1463,590 1469,581 1475,588 1479,595 1483,608 1488,623 1497,628 1505,619 1514,614 1523,612 1535,603 1543,595 1552,580 1557,579 1567,587 1576,587 1583,578 1590,572 1600,571 1608,574 1623,577 1628,572 1647,569 1657,566 1661,557 1665,548 1670,547 1677,549 1682,555 1687,563 1697,569 1707,576 1716,576 1725,592 1732,595 1739,597 1747,588 1757,584 1767,572 1775,568 1785,562 1798,563 1803,567 1813,577 1820,589 1828,588 1832,592 1840,588 1850,586 1858,585 1872,589`);
const slow = pts(`5,400 12,398 23,390 60,400 100,460 146,550 157,565 167,573 173,577 180,577 186,570 198,560 208,550 218,545 228,553 239,562 249,585 259,608 269,635 280,653 292,683 302,707 318,728 331,730 341,725 349,723 360,727 369,717 382,711 394,698 406,685 422,658 431,648 443,630 453,623 465,607 476,593 486,578 496,575 506,573 516,578 542,582 559,577 573,572 584,573 598,578 605,582 621,592 648,608 662,610 682,622 719,634 736,628 758,622 768,625 784,640 805,660 833,684 846,688 870,712 882,717 899,726 927,755 946,767 958,762 974,764 995,774 1029,777 1059,777 1062,775 1066,757 1071,747 1078,740 1085,732 1093,713 1102,697 1107,692 1116,690 1127,681 1136,673 1153,669 1173,666 1183,664 1200,667 1217,671 1237,671 1270,674 1283,679 1297,686 1309,696 1320,697 1331,694 1345,680 1352,670 1367,652 1377,647 1393,646 1410,643 1422,651 1430,652 1442,643 1457,625 1468,612 1477,609 1485,613 1500,619 1513,616 1530,613 1542,609 1552,599 1560,595 1577,593 1593,584 1607,581 1623,579 1657,572 1667,563 1680,560 1693,563 1715,569 1730,579 1743,584 1757,583 1780,573 1800,569 1820,577 1837,581 1872,583`);
const highs = pts(`5,396 12,385 23,357 40,340 172,579 175,552 190,548 226,555 314,771 320,712 334,715 336,682 345,708 352,718 358,730 364,690 367,673 373,690 380,690 386,660 392,655 404,652 408,620 412,597 420,605 428,612 437,568 446,580 452,575 458,550 472,535 478,522 485,530 490,545 497,560 506,545 512,575 520,571 540,582 552,560 565,552 572,555 580,571 600,590 719,643 722,625 728,616 742,605 750,607 758,612 764,630 946,770 950,737 956,745 962,765 1020,775 1030,771 1058,775 1062,645 1068,655 1070,675 1078,690 1085,650 1087,627 1090,640 1097,626 1103,635 1108,650 1116,660 1128,650 1135,645 1142,650 1150,655 1165,650 1175,660 1180,645 1182,638 1186,650 1200,675 1218,670 1221,653 1226,662 1237,660 1245,672 1318,703 1323,682 1332,680 1334,650 1338,643 1343,645 1347,610 1352,612 1358,620 1366,607 1370,622 1385,640 1389,628 1395,632 1405,632 1413,644 1428,650 1436,630 1438,589 1445,600 1452,580 1460,580 1467,564 1470,570 1476,585 1490,625 1500,610 1512,600 1520,602 1535,590 1548,570 1552,561 1556,575 1565,585 1577,580 1582,567 1588,556 1595,562 1605,572 1620,578 1626,563 1640,566 1650,557 1658,550 1661,520 1664,525 1668,541 1675,545 1685,560 1740,595 1745,576 1755,576 1760,563 1770,560 1785,556 1795,560 1800,565 1872,590`);
const lows = pts(`5,402 20,392 40,360 100,580 110,595 116,617 126,628 134,612 140,640 147,665 150,632 155,610 165,612 175,595 180,580 224,560 235,600 242,645 245,700 250,680 258,690 264,732 270,712 278,712 285,765 292,780 300,795 308,782 315,792 320,760 328,750 335,730 352,740 354,755 358,735 362,725 506,575 510,600 514,602 520,592 535,590 542,600 546,580 585,578 592,596 603,610 612,610 618,625 628,620 638,628 642,635 650,622 660,620 668,645 678,648 686,650 695,640 705,645 712,658 718,645 725,635 760,620 770,655 778,672 790,682 800,700 808,692 818,712 830,722 838,708 845,702 850,735 858,750 866,752 872,735 880,735 890,748 898,742 905,765 912,785 918,787 924,797 928,780 938,785 943,797 947,785 953,768 964,772 975,775 983,788 992,798 998,785 1005,785 1011,790 1018,782 1040,781 1058,780 1113,698 1118,690 1137,690 1143,680 1163,688 1170,685 1180,672 1187,680 1195,692 1201,693 1207,688 1215,680 1222,675 1229,685 1235,672 1250,680 1255,693 1262,678 1272,685 1282,708 1288,704 1295,720 1299,745 1302,743 1306,725 1312,715 1320,700 1380,650 1385,652 1391,665 1397,645 1412,655 1417,683 1422,675 1427,665 1432,655 1478,600 1482,640 1485,652 1490,640 1497,635 1505,620 1515,624 1522,612 1680,560 1684,575 1690,578 1700,572 1705,582 1715,575 1720,595 1722,608 1730,604 1738,604 1745,590 1802,572 1812,580 1816,595 1820,610 1823,600 1828,592 1832,600 1840,590 1850,586 1862,590 1872,592`);

const at = (line, x) => {
  for (let i = 1; i < line.length; i++) {
    if (x <= line[i][0]) {
      const [x0, y0] = line[i - 1], [x1, y1] = line[i];
      return y0 + (y1 - y0) * (x - x0) / (x1 - x0);
    }
  }
  return line[line.length - 1][1];
};
let seed = 7;
const rnd = () => (seed = (seed * 16807) % 2147483647) / 2147483647;

const plot = document.getElementById('series');
const rect = (x, y, w, h, fill) => el(plot, 'rect', { x, y, width: w, height: h, fill });

// support and resistance bands
rect(5, 213, 1063, 6, '#ee82ee');
rect(1063, 657, 270, 6, '#ee82ee');
[[1083, 34], [1119, 52], [1176, 5]].forEach(([x, w]) => rect(x, 657, w, 6, '#00ffff'));
rect(1333, 657, 539, 6, '#00ffff');

// day separator
el(plot, 'path', { d: 'M1061.5 102V897', stroke: '#aaa', 'stroke-dasharray': '3 3', fill: 'none' });

// bars, one every two pixels
const bars = {};
const bar = (x, a, b, color) => { if (b - a > 0.5) bars[color] = (bars[color] || '') + `M${x + .5} ${Math.round(a)}V${Math.round(b)}`; };
for (let x = 6; x < 1872; x += 2) {
  const f = at(fast, x), s = at(slow, x), up = f < s;
  const top = Math.min(f, s), bot = Math.max(f, s);
  const rising = at(fast, x + 3) < at(fast, x - 3);
  bar(x, top, bot, up ? (rising ? '#4a62b8' : '#6a6a70') : (rising ? '#6a6a70' : '#93518c'));
  const h = at(highs, x), l = at(lows, x);
  if (h < top - 1) {
    const tip = top - (top - h) * (.6 + .4 * rnd());
    bar(x, tip, top - (top - h) * .15 * rnd(), up ? '#1fb0ee' : '#66686c');
  }
  if (l > bot + 1 && !(up && rising)) {
    const tip = bot + (l - bot) * (.7 + .3 * rnd());
    bar(x, bot, tip, up ? '#66686c' : '#e583e8');
    bar(x, tip - 3, tip, '#1f9fd0');
  }
}
[[51, 219], [53, 232], [55, 260], [57, 272], [59, 280]].forEach(([x, y]) => bar(x, y, 300, '#1fb0ee'));
bar(1135, 601, 655, '#77797c');
bar(1163, 650, 688, '#77797c');
bar(1391, 640, 668, '#77797c');
bar(1069, 650, 700, '#1fb0ee');
for (const color in bars) el(plot, 'path', { d: bars[color], stroke: color, fill: 'none' });

// moving averages: white outline, then a blue (rising) or red (falling) core
const path = line => 'M' + line.map(p => p.join(' ')).join('L');
[slow, fast].forEach(line => {
  el(plot, 'path', { d: path(line), stroke: '#fff', 'stroke-width': 6, fill: 'none', 'stroke-linejoin': 'round', 'shape-rendering': 'crispEdges' });
  let blue = '', red = '';
  for (let i = 1; i < line.length; i++) {
    const seg = `M${line[i - 1]}L${line[i]}`;
    if (line[i][1] < line[i - 1][1]) blue += seg; else red += seg;
  }
  el(plot, 'path', { d: blue, stroke: '#0000ff', 'stroke-width': 4, 'stroke-linecap': 'round', fill: 'none', 'shape-rendering': 'crispEdges' });
  el(plot, 'path', { d: red, stroke: '#dc143c', 'stroke-width': 4, 'stroke-linecap': 'round', fill: 'none', 'shape-rendering': 'crispEdges' });
});
rect(1814, 597, 3, 3, '#fff');

// bid line and shift marker
rect(5, 808, 1867, 1, '#fff');
el(plot, 'path', { d: 'M1623 102h10l-5 5z', fill: '#fff' });

// swing markers
const dots = document.getElementById('dots');
pts(`41,330 211,448 121,691 271,631 391,620 401,733 431,534 451,653 481,495 541,640 571,533 261,805 301,846 641,672 661,596 681,683 691,618 711,687 741,596 801,725 811,673 831,749 841,684 851,780 881,721 921,829 931,761 941,830 961,754 991,831 1001,760 1011,823 1069,645 1079,751 1099,606 1119,702 1129,578 1177,717 1187,629 1207,741 1237,631 1277,749 1347,589 1427,699 1467,545 1497,671 1507,585 1517,662 1557,559 1577,622 1597,550 1617,614 1627,551 1647,606 1657,509 1717,635 1787,550 1817,641 1847,574 1867,621`)
  .forEach(([cx, cy]) => el(dots, 'circle', { cx, cy, r: 6, fill: '#fff' }));

// indicator strips: edges where the colour flips, starting with the first colour
const strip = (id, edges, colors) => {
  const svg = document.getElementById(id);
  edges.slice(1).forEach((x, i) => el(svg, 'rect', { x: edges[i], y: 0, width: x - edges[i], height: 10, fill: colors[i % 2], 'shape-rendering': 'crispEdges' }));
};
strip('strip1', [5, 54, 56, 60, 184, 230, 232, 234, 334, 348, 356, 506, 550, 554, 562, 570, 720, 762, 948, 958, 1025, 1026, 1030, 1032, 1054, 1168, 1172, 1176, 1178, 1182, 1184, 1186, 1234, 1236, 1258, 1260, 1286, 1288, 1294, 1296, 1306, 1308, 1310, 1414, 1426, 1478, 1496, 1676, 1760, 1810, 1842, 1852, 1858, 1860, 1872], ['#00ffff', '#ee82ee']);
// the first strip opens with a run of cyan on both sides of a thin violet mark
strip('strip2', [5, 40, 120, 210, 260, 270, 300, 390, 400, 430, 450, 480, 540, 570, 640, 660, 680, 690, 710, 740, 800, 810, 830, 840, 850, 880, 920, 930, 940, 960, 990, 1000, 1010, 1068, 1078, 1098, 1118, 1128, 1176, 1186, 1206, 1236, 1276, 1346, 1426, 1466, 1496, 1506, 1516, 1556, 1576, 1596, 1616, 1626, 1646, 1656, 1716, 1786, 1816, 1846, 1866, 1872], ['#00ffff', '#ff00ff']);
```
